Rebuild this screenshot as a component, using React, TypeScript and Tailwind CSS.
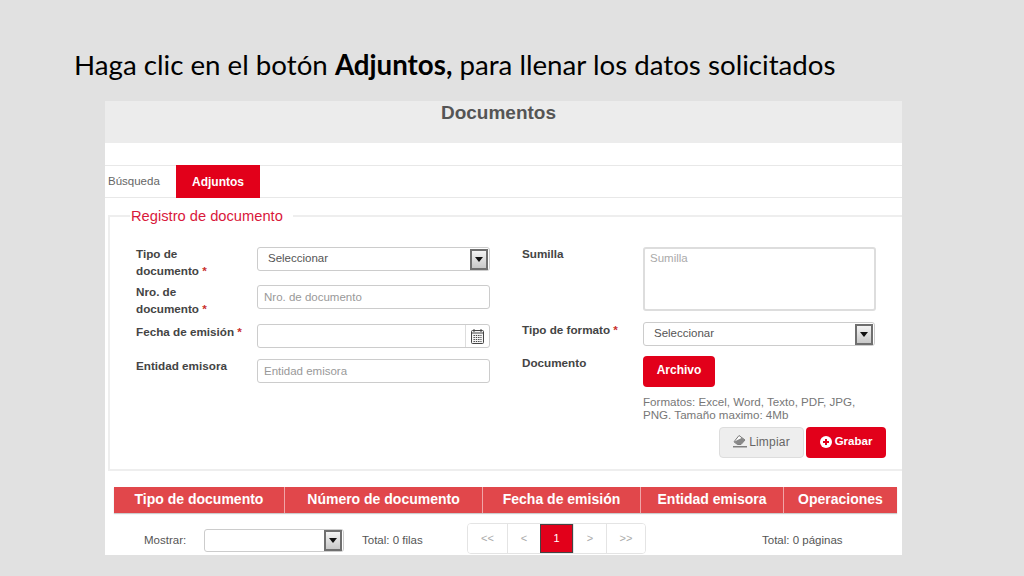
const COLUMNS = [
  { label: 'Tipo de documento', width: 'w-[170px]' },
  { label: 'Número de documento', width: 'w-[198px]' },
  { label: 'Fecha de emisión', width: 'w-[158px]' },
  { label: 'Entidad emisora', width: 'w-[143px]' },
  { label: 'Operaciones', width: 'flex-1' },
]

const PAGES = [
  { label: '<<', width: 'w-[39px]' },
  { label: '<', width: 'w-[33px]' },
  { label: '1', width: 'w-[33px]', active: true },
  { label: '>', width: 'w-[33px]' },
  { label: '>>', width: 'w-[39px]' },
]

function Required() {
  return <span className="text-[#c9302c]"> *</span>
}

function SelectBox({ text, className }: { text?: string; className: string }) {
  return (
    <div className={`flex items-center justify-between rounded-[3px] border border-[#ccc] bg-white pl-[10px] pr-[1px] text-[11.5px] text-[#555] ${className}`}>
      <span>{text}</span>
      <span className="flex h-[21px] w-[18px] items-center justify-center border-2 border-[#6f6f6f] bg-gradient-to-b from-[#f4f4f4] to-[#c8c8c8]">
        <svg width="8" height="5" viewBox="0 0 8 5">
          <path d="M0 0h8L4 5z" fill="#111" />
        </svg>
      </span>
    </div>
  )
}

function TextInput({ placeholder }: { placeholder: string }) {
  return (
    <input
      placeholder={placeholder}
      className="h-[24px] w-[233px] rounded-[3px] border border-[#ccc] bg-white px-[6px] text-[11.5px] text-[#555] placeholder:text-[#999]"
    />
  )
}

function CalendarIcon() {
  return (
    <svg width="13" height="15" viewBox="0 0 13 15" fill="none" stroke="#444">
      <rect x="0.5" y="1.5" width="12" height="13" rx="1" fill="#f4f4f4" />
      <path d="M3 0v3M10 0v3M0.5 4h12" />
      <path d="M2.5 6.5h8M2.5 8.5h8M2.5 10.5h8M2.5 12.5h8" strokeDasharray="1.4 0.9" />
    </svg>
  )
}

function EraserIcon() {
  return (
    <svg width="14" height="13" viewBox="0 0 14 13">
      <path d="M6 0.5l6 4.5-4 4.5H4.5L1 6.8z" fill="#fff" stroke="#777" />
      <path d="M1 6.8l3.5 2.7H8l4-4.5-3-2.2z" fill="#888" />
      <path d="M0 11.8h14" stroke="#666" strokeWidth="1.2" />
    </svg>
  )
}

function PlusCircleIcon() {
  return (
    <svg width="12" height="12" viewBox="0 0 12 12">
      <circle cx="6" cy="6" r="6" fill="#fff" />
      <path d="M6 3v6M3 6h6" stroke="#e2001a" strokeWidth="2" />
    </svg>
  )
}

export default function App() {
  return (
    <div className="h-[576px] w-[1024px] overflow-hidden bg-[#e1e1e1] font-['Liberation_Sans',sans-serif]">
      <h1 className="flex h-[101px] items-start pl-[74px] pt-[47px] font-['Lato',sans-serif] text-[27.7px] font-normal leading-[35px] text-black">
        <span>
          Haga clic en el botón <b>Adjuntos,</b> para llenar los datos solicitados
        </span>
      </h1>

      <div className="ml-[105px] h-[454px] w-[797px] bg-white">
        <div className="h-[42px] bg-[#ececec] pr-[10px] pt-[1px] text-center text-[19px] font-bold leading-[22px] text-[#555]">
          Documentos
        </div>

        <div className="mt-[22px] flex h-[33px] border-y border-[#e8e8e8] text-[11.5px]">
          <div className="flex w-[71px] items-center pl-[3px] text-[#666]">Búsqueda</div>
          <div className="-my-px flex w-[84px] items-center justify-center bg-[#e2001a] text-[12px] font-bold text-white">
            Adjuntos
          </div>
        </div>

        <fieldset className="ml-[3px] mt-[8px] h-[265px] border-y-2 border-l-2 border-[#eee] pl-[21px]">
          <legend className="ml-[-1px] px-[1px] pr-[10px] text-[14.7px] leading-[20px] text-[#d9183b]">
            Registro de documento
          </legend>

          <div className="mt-[21px] flex">
            <div className="flex w-[391px] flex-col text-[11.7px] font-bold text-[#444]">
              <div className="flex h-[38px] pl-[5px]">
                <label className="-mt-[2px] w-[121px] leading-[17px]">
                  Tipo de
                  <br />
                  documento <Required />
                </label>
                <SelectBox text="Seleccionar" className="h-[24px] w-[233px] font-normal" />
              </div>
              <div className="flex h-[39px] pl-[5px]">
                <label className="-mt-[2px] w-[121px] leading-[17px]">
                  Nro. de
                  <br />
                  documento <Required />
                </label>
                <div className="font-normal">
                  <TextInput placeholder="Nro. de documento" />
                </div>
              </div>
              <div className="flex h-[35px] pl-[5px]">
                <label className="-mt-[1px] w-[121px] leading-[17px]">
                  Fecha de emisión <Required />
                </label>
                <div className="flex h-[24px] w-[233px] rounded-[3px] border border-[#ccc] bg-white">
                  <div className="flex-1" />
                  <div className="flex w-[24px] items-center justify-center border-l border-[#ddd]">
                    <CalendarIcon />
                  </div>
                </div>
              </div>
              <div className="flex pl-[5px]">
                <label className="-mt-[2px] w-[121px] leading-[17px]">Entidad emisora</label>
                <div className="font-normal">
                  <TextInput placeholder="Entidad emisora" />
                </div>
              </div>
            </div>

            <div className="flex flex-col text-[11.7px] font-bold text-[#444]">
              <div className="flex h-[75px]">
                <label className="-mt-[1px] w-[121px] leading-[16px]">Sumilla</label>
                <textarea
                  placeholder="Sumilla"
                  className="h-[64px] w-[233px] resize-none rounded-[3px] border-2 border-[#ddd] bg-white px-[5px] py-[1px] text-[11.5px] font-normal placeholder:text-[#aaa]"
                />
              </div>
              <div className="flex h-[34px]">
                <label className="w-[121px] leading-[16px]">
                  Tipo de formato <Required />
                </label>
                <SelectBox text="Seleccionar" className="h-[24px] w-[232px] font-normal" />
              </div>
              <div className="flex">
                <label className="-mt-[1px] w-[121px] leading-[16px]">Documento</label>
                <div className="flex w-[243px] flex-col">
                  <button className="h-[31px] w-[72px] rounded-[4px] bg-[#e2001a] pb-[3px] text-[12px] font-bold text-white">
                    Archivo
                  </button>
                  <p className="mt-[8px] w-[225px] text-[11.6px] font-normal leading-[13px] text-[#777]">
                    Formatos: Excel, Word, Texto, PDF, JPG, PNG. Tamaño maximo: 4Mb
                  </p>
                </div>
              </div>
              <div className="mt-[6px] flex justify-end gap-[2px]">
                <button className="flex h-[31px] w-[85px] items-center justify-center gap-[2px] rounded-[4px] border border-[#ddd] bg-[#eee] pb-[2px] text-[12px] font-normal tracking-[0.2px] text-[#666]">
                  <EraserIcon />
                  Limpiar
                </button>
                <button className="flex h-[31px] w-[80px] items-center justify-center gap-[3px] rounded-[4px] bg-[#e2001a] pb-[2px] text-[11.5px] font-bold text-white">
                  <PlusCircleIcon />
                  Grabar
                </button>
              </div>
            </div>
          </div>
        </fieldset>

        <div className="ml-[9px] mt-[16px] flex h-[26px] w-[783px] bg-[#e1474b] text-[14px] font-bold text-white shadow-[0_1px_1px_#ccc]">
          {COLUMNS.map((col, i) => (
            <div
              key={col.label}
              className={`flex items-center justify-center pb-[2px] ${col.width} ${i > 0 ? 'border-l border-[#f0a5a7]' : ''}`}
            >
              {col.label}
            </div>
          ))}
        </div>

        <div className="mt-[10px] flex h-[31px] text-[11.5px] text-[#555]">
          <span className="ml-[39px] w-[60px] pt-[10px] leading-[14px]">Mostrar:</span>
          <SelectBox className="mt-[6px] h-[23px] w-[140px]" />
          <span className="ml-[18px] w-[105px] pt-[10px] leading-[14px]">Total: 0 filas</span>
          <div className="flex h-[31px] overflow-hidden rounded-[4px] border border-[#e4e4e4] text-[11px] text-[#aaa]">
            {PAGES.map((page) => (
              <div
                key={page.label}
                className={`flex items-center justify-center ${page.width} ${
                  page.active
                    ? 'border border-[#444] bg-[#e2001a] text-white'
                    : 'border-l border-[#e4e4e4] bg-white first:border-l-0'
                }`}
              >
                {page.label}
              </div>
            ))}
          </div>
          <span className="ml-[116px] pt-[10px] leading-[14px]">Total: 0 páginas</span>
        </div>
      </div>
    </div>
  )
}
